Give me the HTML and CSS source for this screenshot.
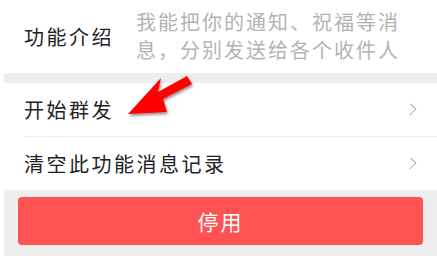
FILE: index.html
```html
<!DOCTYPE html>
<html lang="zh-CN">

<head>
    <meta charset="UTF-8">
    <title>群发助手</title>
    <link rel="stylesheet" href="styles.css">
</head>

<body>
    <div class="page">
        <!-- Intro -->
        <div class="intro">
            <div class="intro-title">功能介绍</div>
            <div class="intro-desc">我能把你的通知、祝福等消息，分别发送给各个收件人</div>
        </div>

        <!-- Actions -->
        <div class="list">
            <div class="list-item">
                <span>开始群发</span>
                <span class="chevron"></span>
            </div>
            <div class="list-item">
                <span>清空此功能消息记录</span>
                <span class="chevron"></span>
            </div>
        </div>

        <div class="footer">
            <div class="btn-stop">停用</div>
        </div>

        <!-- Red pointer arrow -->
        <svg class="pointer" width="90" height="50" viewBox="125 72 90 50">
            <defs>
                <filter id="shade" x="-20%" y="-20%" width="140%" height="150%">
                    <feDropShadow dx="1" dy="2" stdDeviation="1.5" flood-color="#000" flood-opacity="0.45"/>
                </filter>
            </defs>
            <polygon points="128,114 161,78 158,92 187,76 192,84 163,99 167,112" fill="#ff0000" filter="url(#shade)"/>
        </svg>
    </div>
</body>

</html>
```

FILE: styles.css
```css
* {
    margin: 0;
    padding: 0;
    box-sizing: border-box;
}

body {
    font-family: "Noto Sans CJK SC", "Noto Sans", sans-serif;
    background-color: #fff;
    width: 437px;
    height: 256px;
    overflow: hidden;
}

.page {
    position: relative;
    margin-left: 4px;
    height: 256px;
    background-color: #eeeeee;
}

/* Intro block */
.intro {
    display: flex;
    align-items: center;
    height: 73px;
    margin-left: -4px;
    padding-left: 24px;
    background-color: #fff;
}

.intro-title {
    width: 112px;
    font-size: 20px;
    letter-spacing: 2.5px;
    color: #222;
}

.intro-desc {
    width: 280px;
    font-size: 20px;
    line-height: 28px;
    letter-spacing: 2px;
    color: #b3b3b3;
    margin-top: -2px;
}

/* List */
.list {
    margin-top: 10px;
    background-color: #fff;
    margin-left: -4px;
}

.list-item {
    display: flex;
    align-items: center;
    justify-content: space-between;
    height: 53px;
    margin-left: 24px;
    padding-right: 22px;
    font-size: 20px;
    letter-spacing: 2.5px;
    color: #222;
}

.list-item + .list-item {
    border-top: 1px solid #eeeeee;
    height: 54px;
}

.chevron {
    width: 9px;
    height: 9px;
    border-top: 1.5px solid #a8a8a8;
    border-right: 1.5px solid #a8a8a8;
    transform: rotate(45deg) scaleX(0.85);
}

/* Footer button */
.footer {
    padding: 7px 14px 0 14px;
}

.btn-stop {
    height: 48px;
    line-height: 48px;
    border-radius: 4px;
    background-color: #ff5252;
    color: #fff;
    font-size: 21px;
    letter-spacing: 2px;
    text-align: center;
}

.pointer {
    position: absolute;
    left: 121px;
    top: 72px;
}
```
